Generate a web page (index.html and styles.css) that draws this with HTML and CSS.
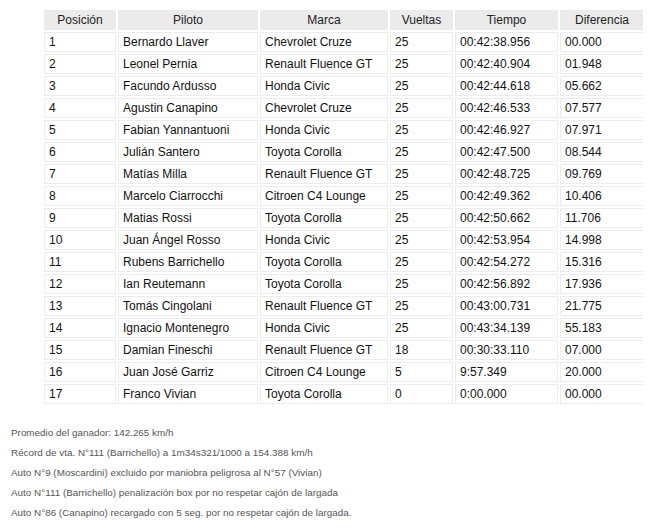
FILE: index.html
```html
<!DOCTYPE html>
<html lang="es">
<head>
<meta charset="utf-8">
<link rel="stylesheet" href="styles.css">
</head>
<body>
<table class="results">
  <thead>
    <tr><th class="c-pos">Posición</th><th class="c-pil">Piloto</th><th class="c-mar">Marca</th><th class="c-vue">Vueltas</th><th class="c-tie">Tiempo</th><th class="c-dif">Diferencia</th></tr>
  </thead>
  <tbody>
    <tr><td>1</td><td>Bernardo Llaver</td><td>Chevrolet Cruze</td><td>25</td><td>00:42:38.956</td><td>00.000</td></tr>
    <tr><td>2</td><td>Leonel Pernia</td><td>Renault Fluence GT</td><td>25</td><td>00:42:40.904</td><td>01.948</td></tr>
    <tr><td>3</td><td>Facundo Ardusso</td><td>Honda Civic</td><td>25</td><td>00:42:44.618</td><td>05.662</td></tr>
    <tr><td>4</td><td>Agustin Canapino</td><td>Chevrolet Cruze</td><td>25</td><td>00:42:46.533</td><td>07.577</td></tr>
    <tr><td>5</td><td>Fabian Yannantuoni</td><td>Honda Civic</td><td>25</td><td>00:42:46.927</td><td>07.971</td></tr>
    <tr><td>6</td><td>Julián Santero</td><td>Toyota Corolla</td><td>25</td><td>00:42:47.500</td><td>08.544</td></tr>
    <tr><td>7</td><td>Matías Milla</td><td>Renault Fluence GT</td><td>25</td><td>00:42:48.725</td><td>09.769</td></tr>
    <tr><td>8</td><td>Marcelo Ciarrocchi</td><td>Citroen C4 Lounge</td><td>25</td><td>00:42:49.362</td><td>10.406</td></tr>
    <tr><td>9</td><td>Matias Rossi</td><td>Toyota Corolla</td><td>25</td><td>00:42:50.662</td><td>11.706</td></tr>
    <tr><td>10</td><td>Juan Ángel Rosso</td><td>Honda Civic</td><td>25</td><td>00:42:53.954</td><td>14.998</td></tr>
    <tr><td>11</td><td>Rubens Barrichello</td><td>Toyota Corolla</td><td>25</td><td>00:42:54.272</td><td>15.316</td></tr>
    <tr><td>12</td><td>Ian Reutemann</td><td>Toyota Corolla</td><td>25</td><td>00:42:56.892</td><td>17.936</td></tr>
    <tr><td>13</td><td>Tomás Cingolani</td><td>Renault Fluence GT</td><td>25</td><td>00:43:00.731</td><td>21.775</td></tr>
    <tr><td>14</td><td>Ignacio Montenegro</td><td>Honda Civic</td><td>25</td><td>00:43:34.139</td><td>55.183</td></tr>
    <tr><td>15</td><td>Damian Fineschi</td><td>Renault Fluence GT</td><td>18</td><td>00:30:33.110</td><td>07.000</td></tr>
    <tr><td>16</td><td>Juan José Garriz</td><td>Citroen C4 Lounge</td><td>5</td><td>9:57.349</td><td>20.000</td></tr>
    <tr><td>17</td><td>Franco Vivian</td><td>Toyota Corolla</td><td>0</td><td>0:00.000</td><td>00.000</td></tr>
  </tbody>
</table>
<div class="notes">
  <p>Promedio del ganador: 142.265 km/h</p>
  <p>Récord de vta. N°111 (Barrichello) a 1m34s321/1000 a 154.388 km/h</p>
  <p>Auto N°9 (Moscardini) excluido por maniobra peligrosa al N°57 (Vivian)</p>
  <p>Auto N°111 (Barrichello) penalización box por no respetar cajón de largada</p>
  <p>Auto N°86 (Canapino) recargado con 5 seg. por no respetar cajón de largada.</p>
</div>
</body>
</html>
```
FILE: styles.css
```css
html, body {
  background: #ffffff;
}
body {
  margin: 8px;
  font-family: "Liberation Sans", Arial, sans-serif;
}
.results {
  margin-left: 34px;
  border-collapse: separate;
  border-spacing: 2px;
  table-layout: fixed;
  width: 604px;
  font-size: 12px;
  color: #111;
}
.results th {
  box-sizing: border-box;
  background: #ebebeb;
  font-weight: normal;
  color: #222;
  height: 20px;
  padding: 0;
  text-align: center;
}
.c-pos { width: 72px; }
.c-pil { width: 140px; }
.c-mar { width: 128px; }
.c-vue { width: 63px; }
.c-tie { width: 103px; }
.c-dif { width: 84px; }
.results td {
  border: 1px solid #ececec;
  height: 18px;
  padding: 0 0 0 4px;
  text-align: left;
  white-space: nowrap;
}
.notes {
  margin-top: 17px;
  margin-left: 3px;
  font-size: 9.9px;
  color: #555;
}
.notes p {
  margin: 0;
  line-height: 20px;
}
```
